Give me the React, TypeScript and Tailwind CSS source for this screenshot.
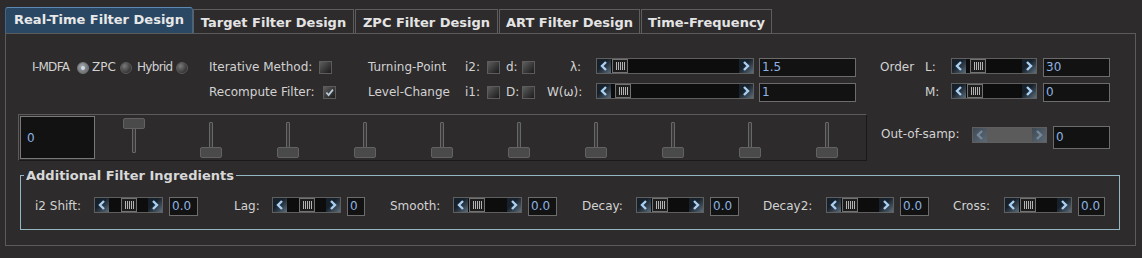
import * as React from "react";
import clsx from "clsx";

/* ─── small Swing-like widgets ─────────────────────────────────────────── */

function Label({ className, children }: { className?: string; children: React.ReactNode }) {
  return <div className={clsx("h-[19px] shrink-0 leading-[19px] whitespace-nowrap", className)}>{children}</div>;
}

function Chevron({ dir, dim }: { dir: "l" | "r"; dim?: boolean }) {
  return (
    <svg viewBox="0 0 8 10" className="w-[8px] h-[10px]" aria-hidden>
      <path
        d={dir === "l" ? "M6 1 L2 5 L6 9" : "M2 1 L6 5 L2 9"}
        fill="none"
        stroke={dim ? "#75879a" : "#a9cff2"}
        strokeWidth="2.4"
      />
    </svg>
  );
}

function ArrowBtn({ dir, dim }: { dir: "l" | "r"; dim?: boolean }) {
  return (
    <div
      className={clsx(
        "w-[14px] h-full shrink-0 flex items-center justify-center",
        dim
          ? "bg-linear-to-br from-[#3f4a55] to-[#5d6974]"
          : "bg-linear-to-br from-[#17212b] from-40% to-[#5e6f7e]",
      )}
    >
      <Chevron dir={dir} dim={dim} />
    </div>
  );
}

function Grip() {
  return (
    <svg viewBox="0 0 9 8" className="w-[9px] h-[8px]" aria-hidden>
      <path d="M0.5 0v8M2.5 0v8M4.5 0v8M6.5 0v8M8.5 0v8" stroke="#b4b4b4" strokeWidth="1" />
    </svg>
  );
}

function HScroll({ className, pre, disabled }: { className: string; pre?: string; disabled?: boolean }) {
  return (
    <div className={clsx("h-[16px] shrink-0 flex border border-[#5f5f5f]", className)}>
      <ArrowBtn dir="l" dim={disabled} />
      {disabled ? (
        <div className="flex-1 bg-[#5b5b5b]" />
      ) : (
        <>
          <div className={clsx("shrink-0 bg-[#0d0d0d]", pre)} />
          <div className="w-[16px] shrink-0 border border-[#727272] bg-[#1c1c1c] flex items-center justify-center">
            <Grip />
          </div>
          <div className="flex-1 bg-[#0d0d0d]" />
        </>
      )}
      <ArrowBtn dir="r" dim={disabled} />
    </div>
  );
}

function Field({ className, children }: { className?: string; children: React.ReactNode }) {
  return (
    <div
      className={clsx(
        "h-[19px] shrink-0 border border-[#6c6c6c] bg-[#121212] pl-[2px] leading-[17px] text-[#8db3e2]",
        className,
      )}
    >
      {children}
    </div>
  );
}

function RadioCell({ className, on }: { className: string; on?: boolean }) {
  return (
    <div className={clsx("h-[19px] shrink-0 flex items-center", className)}>
      {on ? (
        <div className="w-[12px] h-[12px] rounded-full border border-[#75787b] bg-radial-[at_40%_35%] from-[#a4a7ab] to-[#5c5f62] flex items-center justify-center">
          <div className="w-[4px] h-[4px] rounded-full bg-[#cfdcea]" />
        </div>
      ) : (
        <div className="w-[12px] h-[12px] rounded-full border border-[#5a5a5a] bg-radial-[at_35%_30%] from-[#7a7a7a] to-[#1b1b1b]" />
      )}
    </div>
  );
}

function CheckCell({ className, on }: { className: string; on?: boolean }) {
  return (
    <div className={clsx("h-[19px] shrink-0 flex items-center", className)}>
      <div className="w-[13px] h-[13px] border border-[#5c5c5c] bg-linear-to-br from-[#5e5e5e] to-[#1c1c1c] flex items-center justify-center">
        {on && (
          <svg viewBox="0 0 10 10" className="w-[9px] h-[9px]" aria-hidden>
            <path d="M1.5 5 L4 7.8 L8.8 1.8" fill="none" stroke="#b9cadb" strokeWidth="2" />
          </svg>
        )}
      </div>
    </div>
  );
}

function VSlider({ top }: { top?: boolean }) {
  return (
    <div className="relative w-[22px] h-[40px]">
      <div className="absolute left-[9px] top-[4px] w-[4px] h-[31px] rounded-[1px] border border-[#686868] bg-[#3a3a3a]" />
      <div
        className={clsx(
          "absolute left-0 w-[22px] h-[11px] rounded-[2px] border border-[#626262] bg-[#4a4a4a]",
          top ? "top-0" : "bottom-0",
        )}
      />
    </div>
  );
}

const TABS = [
  { label: "Target Filter Design", w: "w-[161px]" },
  { label: "ZPC Filter Design", w: "ml-[1px] w-[143px]" },
  { label: "ART Filter Design", w: "ml-[1px] w-[141px]" },
  { label: "Time-Frequency", w: "ml-[1px] w-[131px]" },
];

const SLIDERS = [true, false, false, false, false, false, false, false, false, false];

export default function App() {
  return (
    <div className="w-[1142px] h-[258px] overflow-hidden bg-[#2d2b2c] px-[5px] pt-[7px] font-['DejaVu_Sans',sans-serif] text-[12px] text-[#d2d2d2]">
      {/* Tabs */}
      <div className="flex items-end h-[26px]">
        <div className="w-[188px] h-[26px] shrink-0 rounded-t-[3px] border border-b-0 border-[#42668a] border-t-[#5d8ab5] bg-[#2a4864] pb-[2px] flex items-center justify-center font-bold text-[13px] text-[#e8e8e8]">
          Real-Time Filter Design
        </div>
        {TABS.map((t) => (
          <div
            key={t.label}
            className={clsx(
              "h-[24px] shrink-0 border border-b-0 border-[#5e5e5e] pt-[2px] flex items-center justify-center font-bold text-[13px] text-[#e4e4e4]",
              t.w,
            )}
          >
            {t.label}
          </div>
        ))}
      </div>

      {/* Panel */}
      <div className="w-[1131px] h-[213px] border border-[#5b5b5b]">
        {/* Row 1 */}
        <div className="flex items-start h-[19px] mt-[24px] ml-[26px]">
          <Label className="w-[45px] tracking-[-0.7px]">I-MDFA</Label>
          <RadioCell className="w-[15px]" on />
          <Label className="w-[28px]">ZPC</Label>
          <RadioCell className="w-[17px]" />
          <Label className="w-[39px] tracking-[-0.7px]">Hybrid</Label>
          <RadioCell className="w-[33px]" />
          <Label className="w-[110px]">Iterative Method:</Label>
          <CheckCell className="w-[49px]" />
          <Label className="w-[97px]">Turning-Point</Label>
          <Label className="w-[22px]">i2:</Label>
          <CheckCell className="w-[19px]" />
          <Label className="w-[16px]">d:</Label>
          <CheckCell className="w-[48px]" />
          <Label className="w-[26px]">λ:</Label>
          <HScroll className="w-[158px]" pre="w-[1px]" />
          <Field className="ml-[5px] w-[97px]">1.5</Field>
          <Label className="ml-[24px] w-[45px]">Order</Label>
          <Label className="w-[26px]">L:</Label>
          <HScroll className="w-[86px]" pre="w-[4px]" />
          <Field className="ml-[6px] w-[67px]">30</Field>
        </div>

        {/* Row 2 */}
        <div className="flex items-start h-[19px] mt-[6px] ml-[203px]">
          <Label className="w-[114px]">Recompute Filter:</Label>
          <CheckCell className="w-[45px]" on />
          <Label className="w-[97px]">Level-Change</Label>
          <Label className="w-[22px]">i1:</Label>
          <CheckCell className="w-[19px]" />
          <Label className="w-[16px]">D:</Label>
          <CheckCell className="w-[25px]" />
          <Label className="w-[49px]">W(ω):</Label>
          <HScroll className="w-[158px]" pre="w-[4px]" />
          <Field className="ml-[5px] w-[97px]">1</Field>
          <Label className="ml-[69px] w-[26px]">M:</Label>
          <HScroll className="w-[86px]" pre="w-[1px]" />
          <Field className="ml-[6px] w-[67px]">0</Field>
        </div>

        {/* Row 3: slider bank + out-of-sample */}
        <div className="flex items-start mt-[12px] ml-[12px]">
          <div className="w-[849px] h-[47px] shrink-0 flex items-start border border-t-[#5b5b5b] border-l-[#5b5b5b] border-b-[#191919] border-r-[#191919]">
            <div className="ml-[1px] mt-[1px] w-[75px] h-[43px] shrink-0 border border-[#787878] bg-[#121212] pl-[6px] flex items-center text-[#8db3e2]">
              0
            </div>
            {SLIDERS.map((top, i) => (
              <div key={i} className="w-[77px] shrink-0 flex justify-center pt-[3px]">
                <VSlider top={top} />
              </div>
            ))}
          </div>
          <div className="ml-[14px] mt-[12px] flex items-start">
            <div className="w-[91px] h-[16px] leading-[16px] shrink-0 whitespace-nowrap">Out-of-samp:</div>
            <HScroll className="mt-[1px] w-[75px]" disabled />
            <div className="ml-[6px] w-[57px] h-[23px] shrink-0 border border-[#6c6c6c] bg-[#121212] pl-[2px] leading-[21px] text-[#8db3e2]">
              0
            </div>
          </div>
        </div>

        {/* Additional Filter Ingredients */}
        <fieldset className="ml-[14px] mt-[7px] w-[1100px] border border-[#93b7c3] pb-[13px]">
          <legend className="ml-[3px] px-[2px] font-bold text-[13px] leading-[15px] text-[#d8d8d8]">
            Additional Filter Ingredients
          </legend>
          <div className="flex items-start h-[19px] mt-[14px] ml-[14px]">
            <Label className="w-[59px]">i2 Shift:</Label>
            <HScroll className="w-[69px]" pre="w-[12px]" />
            <Field className="ml-[6px] w-[29px]">0.0</Field>
            <Label className="ml-[36px] w-[38px]">Lag:</Label>
            <HScroll className="w-[69px]" pre="w-[12px]" />
            <Field className="ml-[6px] w-[18px]">0</Field>
            <Label className="ml-[25px] w-[63px]">Smooth:</Label>
            <HScroll className="w-[69px]" pre="w-[1px]" />
            <Field className="ml-[6px] w-[29px]">0.0</Field>
            <Label className="ml-[25px] w-[54px]">Decay:</Label>
            <HScroll className="w-[68px]" pre="w-[1px]" />
            <Field className="ml-[6px] w-[29px]">0.0</Field>
            <Label className="ml-[24px] w-[63px]">Decay2:</Label>
            <HScroll className="w-[68px]" pre="w-[1px]" />
            <Field className="ml-[6px] w-[29px]">0.0</Field>
            <Label className="ml-[24px] w-[51px]">Cross:</Label>
            <HScroll className="w-[68px]" pre="w-[1px]" />
            <Field className="ml-[6px] w-[27px]">0.0</Field>
          </div>
        </fieldset>
      </div>
    </div>
  );
}
